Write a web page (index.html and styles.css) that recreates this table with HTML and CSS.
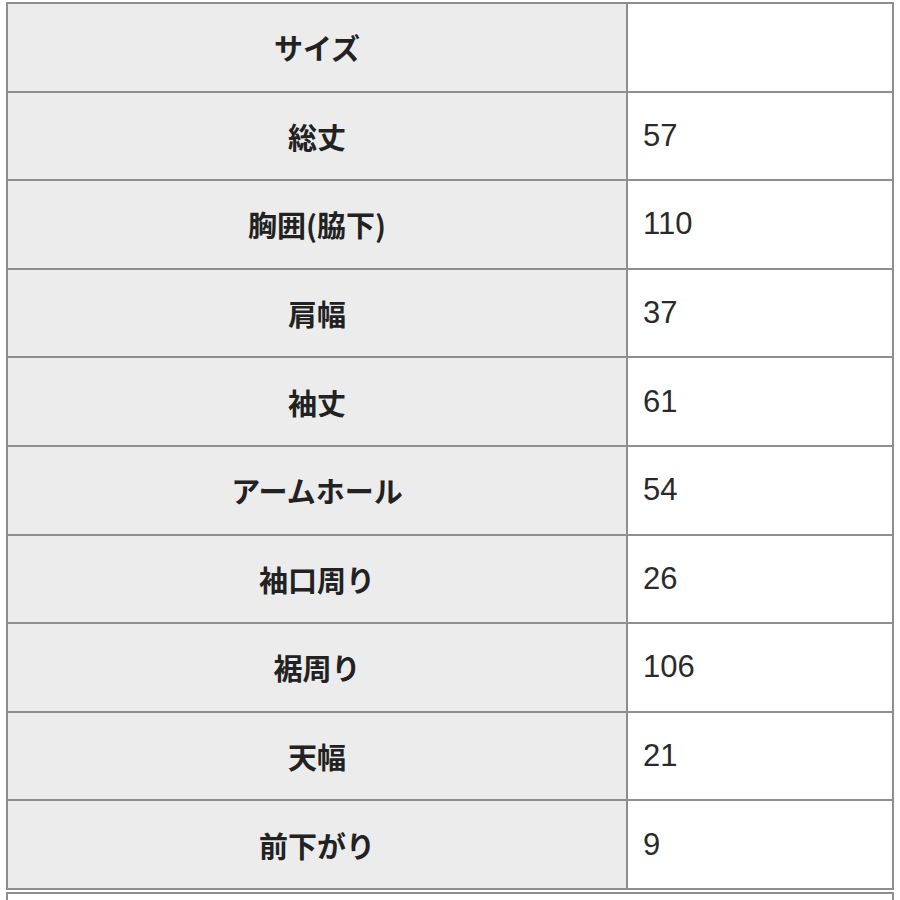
FILE: index.html
```html
<!DOCTYPE html>
<html lang="ja">
<head>
<meta charset="utf-8">
<title>サイズ表</title>
<link rel="stylesheet" href="styles.css">
</head>
<body>
<div class="wrap">
  <table class="size-table">
    <tbody>
      <tr><th>サイズ</th><td></td></tr>
      <tr><th>総丈</th><td>57</td></tr>
      <tr><th>胸囲(脇下)</th><td>110</td></tr>
      <tr><th>肩幅</th><td>37</td></tr>
      <tr><th>袖丈</th><td>61</td></tr>
      <tr><th>アームホール</th><td>54</td></tr>
      <tr><th>袖口周り</th><td>26</td></tr>
      <tr><th>裾周り</th><td>106</td></tr>
      <tr><th>天幅</th><td>21</td></tr>
      <tr><th>前下がり</th><td>9</td></tr>
    </tbody>
  </table>
  <div class="next"></div>
</div>
</body>
</html>
```
FILE: styles.css
```css
html, body {
  margin: 0;
  padding: 0;
  background: #ffffff;
}
.wrap {
  padding: 2px 6px 0 6px;
}
.size-table {
  width: 888px;
  border-collapse: separate;
  border-spacing: 0;
  border-top: 2px solid #8e8e8e;
  border-left: 2px solid #8e8e8e;
  table-layout: fixed;
}
.size-table th,
.size-table td {
  height: 86.6px;
  padding: 0;
  border-right: 2px solid #8e8e8e;
  border-bottom: 2px solid #8e8e8e;
  box-sizing: content-box;
}
.size-table th {
  width: 618px;
  background: #ececec;
  color: #222222;
  font-family: "Noto Sans CJK JP", "Noto Sans", sans-serif;
  font-weight: 700;
  font-size: 29px;
  text-align: center;
  vertical-align: middle;
  letter-spacing: 0;
}
.size-table td {
  background: #ffffff;
  color: #2a2a2a;
  font-family: "Liberation Sans", Arial, sans-serif;
  font-size: 31px;
  text-align: left;
  padding-left: 15px;
  vertical-align: middle;
}
.next {
  margin-top: 2px;
  height: 10px;
  border-top: 2px solid #8e8e8e;
  border-left: 2px solid #8e8e8e;
  border-right: 2px solid #8e8e8e;
}
```
